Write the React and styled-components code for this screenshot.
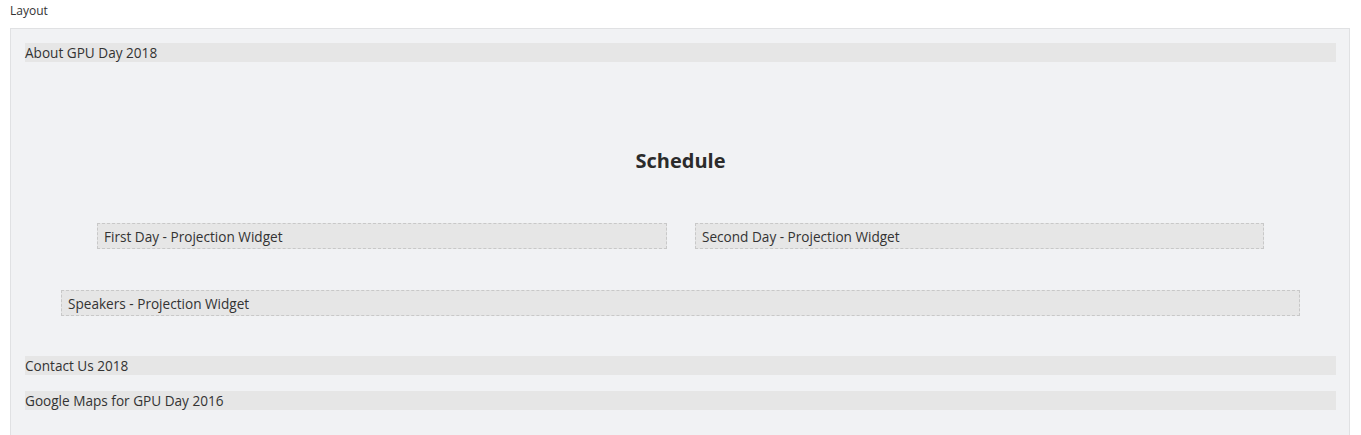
import styled, { createGlobalStyle } from "styled-components";

const Global = createGlobalStyle`
  body {
    margin: 0;
    background: #ffffff;
    font-family: "Open Sans", "Noto Sans", sans-serif;
    color: #333333;
  }
`;

const Pagina = styled.div`
  padding: 0 11px 0 10px;
`;

const Titulo = styled.div`
  font-size: 12px;
  line-height: 16px;
  padding-top: 3px;
  height: 28px;
  box-sizing: border-box;
`;

const Painel = styled.div`
  background: #f1f2f4;
  border: 1px solid #e0e1e3;
  padding: 14px 13px 40px 14px;
  display: flex;
  flex-direction: column;
`;

const Barra = styled.div`
  background: #e6e6e6;
  height: 19px;
  line-height: 19px;
  font-size: 13.6px;
  white-space: nowrap;
  margin-top: ${(p) => p.$top || 0}px;
`;

const Cabecalho = styled.h2`
  margin: 87px 0 0;
  text-align: center;
  font-size: 20px;
  line-height: 24px;
  font-weight: 700;
  color: #2b2b2b;
`;

const Linha = styled.div`
  display: flex;
  justify-content: center;
  gap: 28px;
  margin-top: ${(p) => p.$top}px;
  padding: 0 ${(p) => p.$lado || 0}px;
`;

const Widget = styled.div`
  flex: ${(p) => (p.$largura ? `0 0 ${p.$largura}px` : "1")};
  height: 26px;
  box-sizing: border-box;
  border: 1px dashed #c8c8c8;
  background: #e6e6e6;
  font-size: 13.6px;
  line-height: 24px;
  padding: 1px 0 0 6px;
  white-space: nowrap;
`;

export default function App() {
  return (
    <Pagina>
      <Global />
      <Titulo>Layout</Titulo>
      <Painel>
        <Barra>About GPU Day 2018</Barra>
        <Cabecalho>Schedule</Cabecalho>
        <Linha $top={50}>
          <Widget $largura={570}>First Day - Projection Widget</Widget>
          <Widget $largura={569}>Second Day - Projection Widget</Widget>
        </Linha>
        <Linha $top={41} $lado={36}>
          <Widget>Speakers - Projection Widget</Widget>
        </Linha>
        <Barra $top={40}>Contact Us 2018</Barra>
        <Barra $top={16}>Google Maps for GPU Day 2016</Barra>
      </Painel>
    </Pagina>
  );
}
